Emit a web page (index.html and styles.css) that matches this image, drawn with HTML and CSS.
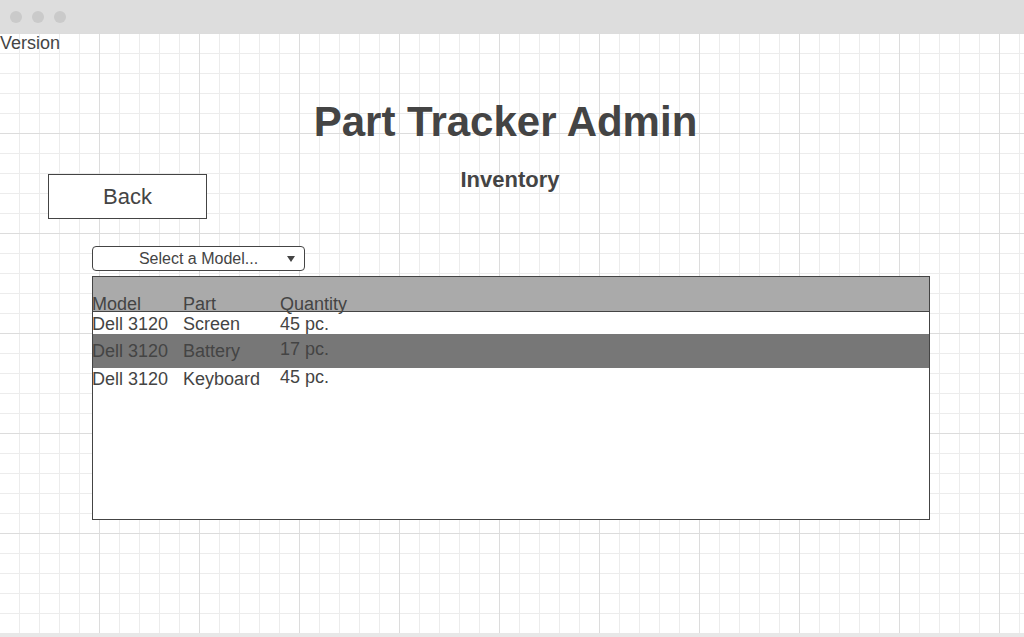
FILE: index.html
```html
<!DOCTYPE html>
<html lang="en">
<head>
<meta charset="utf-8">
<title>Part Tracker Admin</title>
<link rel="stylesheet" href="styles.css">
</head>
<body>
<div class="window">
  <div class="titlebar">
    <span class="dot"></span><span class="dot"></span><span class="dot"></span>
  </div>
  <main class="canvas">
    <div class="version">Version</div>
    <h1 class="title">Part Tracker Admin</h1>
    <div class="subrow">
      <button class="back" type="button">Back</button>
      <h2 class="subtitle">Inventory</h2>
      <div></div>
    </div>
    <div class="select">
      <span class="select-label">Select a Model...</span>
      <svg class="select-arrow" width="8" height="6" viewBox="0 0 8 6"><polygon points="0,0 8,0 4,6" fill="#444"/></svg>
    </div>
    <div class="table">
      <div class="row head">
        <div class="cell">Model</div><div class="cell">Part</div><div class="cell">Quantity</div>
      </div>
      <div class="row r1">
        <div class="cell">Dell 3120</div><div class="cell">Screen</div><div class="cell">45 pc.</div>
      </div>
      <div class="row r2">
        <div class="cell">Dell 3120</div><div class="cell">Battery</div><div class="cell raise">17 pc.</div>
      </div>
      <div class="row r3">
        <div class="cell">Dell 3120</div><div class="cell">Keyboard</div><div class="cell raise">45 pc.</div>
      </div>
    </div>
  </main>
  <div class="footer"></div>
</div>
</body>
</html>
```

FILE: styles.css
```css
* { box-sizing: border-box; }
html, body { margin: 0; padding: 0; }
body {
  font-family: "Liberation Sans", Arial, sans-serif;
  color: #444;
  background: #fff;
}
.window {
  width: 1024px;
  height: 637px;
  display: flex;
  flex-direction: column;
  overflow: hidden;
}
.titlebar {
  height: 33px;
  background: #dddddd;
  display: flex;
  align-items: center;
  gap: 10px;
  padding-left: 10px;
  flex: none;
}
.dot {
  width: 12px;
  height: 12px;
  border-radius: 50%;
  background: #cacaca;
}
.canvas {
  flex: 1;
  display: flex;
  flex-direction: column;
  background-color: #fff;
  background-image:
    linear-gradient(to right, #dcdcdc 1px, transparent 1px),
    linear-gradient(to bottom, #dcdcdc 1px, transparent 1px),
    linear-gradient(to right, #ececec 1px, transparent 1px),
    linear-gradient(to bottom, #ececec 1px, transparent 1px);
  background-size: 100px 100px, 100px 100px, 20px 20px, 20px 20px;
  background-position: 99px 0, 0 0, 19px 0, 0 0;
}
.footer {
  height: 4px;
  flex: none;
  background: #e8e8e8;
}
.version {
  font-size: 18px;
  line-height: 20px;
  align-self: flex-start;
}
.title {
  margin: 45px 0 0;
  padding-right: 13px;
  font-size: 42px;
  line-height: 48px;
  font-weight: bold;
  text-align: center;
  color: #444;
}
.subrow {
  margin-top: 21px;
  display: grid;
  grid-template-columns: 1fr auto 1fr;
  align-items: start;
}
.back {
  justify-self: start;
  margin: 7px 0 0 48px;
  width: 159px;
  height: 45px;
  border: 1px solid #444;
  background: #fff;
  font-family: inherit;
  font-size: 22px;
  color: #444;
  padding: 0;
  display: flex;
  align-items: center;
  justify-content: center;
}
.subtitle {
  margin: 0;
  padding-right: 4px;
  font-size: 22px;
  line-height: 26px;
  font-weight: bold;
  color: #444;
}
.select {
  margin: 27px 0 0 92px;
  width: 213px;
  height: 25px;
  border: 1px solid #444;
  border-radius: 4px;
  background: #fff;
  display: grid;
  grid-template-columns: 1fr auto 1fr;
  align-items: center;
  font-size: 16px;
}
.select-label { grid-column: 2; }
.select-arrow {
  grid-column: 3;
  justify-self: end;
  margin-right: 9px;
}
.table {
  margin: 5px 0 0 92px;
  width: 838px;
  height: 244px;
  border: 1px solid #444;
  background: #fff;
  font-size: 18px;
  line-height: 20px;
}
.row {
  display: grid;
  grid-template-columns: 91px 97px 1fr;
  align-items: start;
}
.cell { margin-left: -1px; white-space: nowrap; }
.head {
  height: 35px;
  padding-top: 17px;
  background: #aaaaaa;
  border-bottom: 1px solid #444;
}
.r1 { height: 22px; padding-top: 2px; }
.r2 { height: 34px; padding-top: 7px; background: #777777; }
.r3 { padding-top: 1px; }
.raise { margin-top: -2px; }
```
